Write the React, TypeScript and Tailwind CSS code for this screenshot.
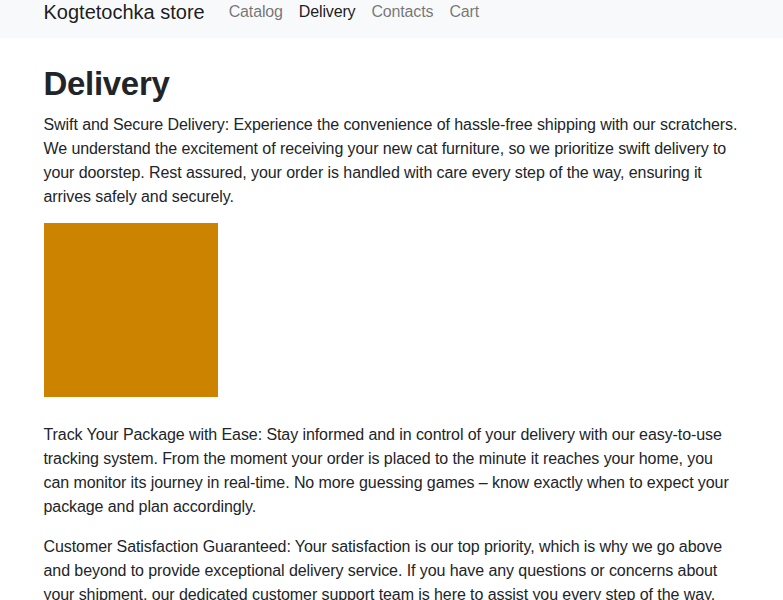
const links = [
  { name: "Catalog", active: false },
  { name: "Delivery", active: true },
  { name: "Contacts", active: false },
  { name: "Cart", active: false },
]

export default function App() {
  return (
    <div className="min-h-[600px] bg-white text-[#212529] font-['Liberation_Sans',Arial,sans-serif] overflow-hidden">
      <nav className="bg-[#f8f9fa] h-[54px] -mt-[16px] py-2">
        <div className="mx-auto w-[720px] px-3 flex items-center h-[40px]">
          <span className="text-[20px] leading-[30px] text-black/90 mr-4">Kogtetochka store</span>
          <ul className="flex tracking-[-0.15px]">
            {links.map((l) => (
              <li key={l.name}>
                <span className={`block px-2 py-2 text-[16px] leading-6 ${l.active ? "text-black/90" : "text-black/55"}`}>{l.name}</span>
              </li>
            ))}
          </ul>
        </div>
      </nav>
      <main className="mx-auto w-[720px] px-3 pt-[26px]">
        <h1 className="text-[33px] font-semibold tracking-[-0.3px] leading-[1.23] mb-2">Delivery</h1>
        <div className="text-[16px] leading-6 tracking-[-0.08px]">
          <p className="mb-[14px]">
            Swift and Secure Delivery: Experience the convenience of hassle-free shipping with our scratchers. We understand the excitement of receiving your new cat furniture, so we prioritize swift delivery to your doorstep. Rest assured, your order is handled with care every step of the way, ensuring it arrives safely and securely.
          </p>
          <div className="w-[174px] h-[174px] bg-[#cc8400] mb-[26px]" />
          <p className="mb-4">
            Track Your Package with Ease: Stay informed and in control of your delivery with our easy-to-use tracking system. From the moment your order is placed to the minute it reaches your home, you can monitor its journey in real-time. No more guessing games – know exactly when to expect your package and plan accordingly.
          </p>
          <p className="mb-4">
            Customer Satisfaction Guaranteed: Your satisfaction is our top priority, which is why we go above and beyond to provide exceptional delivery service. If you have any questions or concerns about your shipment, our dedicated customer support team is here to assist you every step of the way.
          </p>
        </div>
      </main>
    </div>
  )
}
